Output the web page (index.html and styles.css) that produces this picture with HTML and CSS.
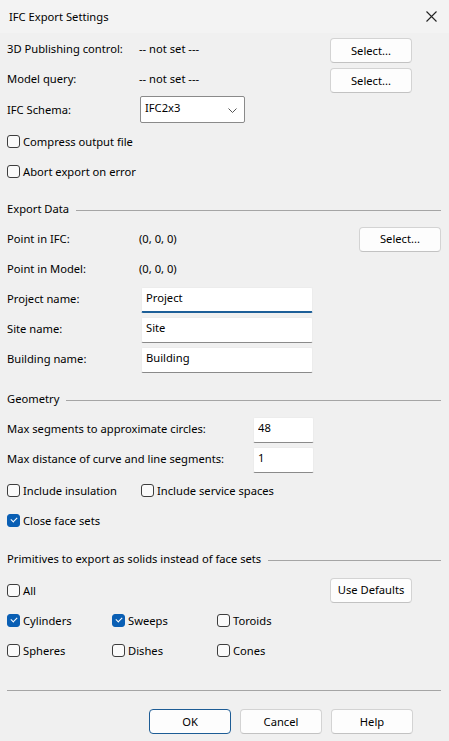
FILE: index.html
```html
<!DOCTYPE html>
<html lang="en">
<head>
    <meta charset="UTF-8">
    <meta name="viewport" content="width=device-width, initial-scale=1.0">
    <title>IFC Export Settings</title>
    <link rel="stylesheet" href="styles.css">
</head>
<body>
<div class="dialog">
    <div class="titlebar">
        <span class="title">IFC Export Settings</span>
        <svg class="close" width="11" height="11" viewBox="0 0 11 11">
            <path d="M0.5 0.5 L10.5 10.5 M10.5 0.5 L0.5 10.5" stroke="#222" stroke-width="1.1" fill="none"/>
        </svg>
    </div>

    <div class="content">
        <div class="row r1 pad_right">
            <span class="lbl">3D Publishing control:</span>
            <span class="val">-- not set ---</span>
            <button class="btn low">Select...</button>
        </div>
        <div class="row pad_right">
            <span class="lbl">Model query:</span>
            <span class="val">-- not set ---</span>
            <button class="btn low">Select...</button>
        </div>
        <div class="row r3">
            <span class="lbl">IFC Schema:</span>
            <div class="combo">
                <span>IFC2x3</span>
                <svg width="9" height="5" viewBox="0 0 9 5">
                    <path d="M0.5 0.5 L4.5 4.5 L8.5 0.5" stroke="#555" stroke-width="1" fill="none"/>
                </svg>
            </div>
        </div>
        <div class="row r4">
            <label class="chk"><span class="box"></span>Compress output file</label>
        </div>
        <div class="row">
            <label class="chk"><span class="box"></span>Abort export on error</label>
        </div>

        <div class="row group g1">
            <span class="gname">Export Data</span>
            <span class="gline"></span>
        </div>
        <div class="row r_pt">
            <span class="lbl">Point in IFC:</span>
            <span class="val">(0, 0, 0)</span>
            <button class="btn">Select...</button>
        </div>
        <div class="row">
            <span class="lbl">Point in Model:</span>
            <span class="val">(0, 0, 0)</span>
        </div>
        <div class="row">
            <span class="lbl lbl_in">Project name:</span>
            <input class="txt wide focused" type="text" value="Project">
        </div>
        <div class="row">
            <span class="lbl lbl_in">Site name:</span>
            <input class="txt wide" type="text" value="Site">
        </div>
        <div class="row">
            <span class="lbl lbl_in">Building name:</span>
            <input class="txt wide" type="text" value="Building">
        </div>

        <div class="row group g2">
            <span class="gname">Geometry</span>
            <span class="gline"></span>
        </div>
        <div class="row">
            <span class="lbl lbl_long lbl_in">Max segments to approximate circles:</span>
            <input class="txt short" type="text" value="48">
        </div>
        <div class="row">
            <span class="lbl lbl_long lbl_in">Max distance of curve and line segments:</span>
            <input class="txt short" type="text" value="1">
        </div>
        <div class="row r_ins">
            <label class="chk c134"><span class="box"></span>Include insulation</label>
            <label class="chk"><span class="box"></span>Include service spaces</label>
        </div>
        <div class="row">
            <label class="chk"><span class="box on"></span>Close face sets</label>
        </div>

        <div class="row group g3">
            <span class="gname">Primitives to export as solids instead of face sets</span>
            <span class="gline"></span>
        </div>
        <div class="row r_all pad_right">
            <label class="chk"><span class="box"></span>All</label>
            <span class="val"></span>
            <button class="btn">Use Defaults</button>
        </div>
        <div class="row">
            <label class="chk c105"><span class="box on"></span>Cylinders</label>
            <label class="chk c105"><span class="box on"></span>Sweeps</label>
            <label class="chk"><span class="box"></span>Toroids</label>
        </div>
        <div class="row">
            <label class="chk c105"><span class="box"></span>Spheres</label>
            <label class="chk c105"><span class="box"></span>Dishes</label>
            <label class="chk"><span class="box"></span>Cones</label>
        </div>

        <hr class="sep">

        <div class="actions">
            <button class="btn default">OK</button>
            <button class="btn">Cancel</button>
            <button class="btn">Help</button>
        </div>
    </div>
</div>
</body>
</html>
```

FILE: styles.css
```css
* {
  box-sizing: border-box;
}
body {
  margin: 0;
  background: #f0f0f0;
  font-family: "Noto Sans", sans-serif;
  font-size: 11.2px;
  color: #000;
}
.dialog {
  width: 449px;
  height: 741px;
}
.titlebar {
  height: 33px;
  display: flex;
  align-items: center;
  justify-content: space-between;
  padding: 0 12px 1px 9px;
  background: #f3f3f3;
}
.content {
  padding: 0 8px 0 7px;
}
.row {
  height: 30px;
  display: flex;
  align-items: center;
}
.pad_right {
  padding-right: 29px;
}
.r3 {
  margin-top: 1px;
}
.r4 {
  margin-top: 2px;
}
.lbl {
  width: 132px;
  flex-shrink: 0;
}
.lbl_long {
  width: 246px;
}
.lbl_in {
  padding-top: 1px;
}
.val {
  flex: 1;
}

/* buttons */
.btn {
  width: 82px;
  height: 25px;
  margin-left: auto;
  font-family: inherit;
  font-size: 11.2px;
  color: #000;
  background: #fdfdfd;
  border: 1px solid #d3d3d3;
  border-bottom-color: #c2c2c2;
  border-radius: 4px;
  padding: 0 0 1px;
}
.low {
  margin-top: 5px;
}
.r_pt .btn {
  margin-top: 2px;
}
.btn.default {
  border: 1px solid #1d5c95;
}

/* combo box */
.combo {
  width: 105px;
  height: 27px;
  margin-left: 1px;
  display: flex;
  align-items: center;
  justify-content: space-between;
  padding: 0 7px 4px 4px;
  background: #fff;
  border: 1px solid #8a8a8a;
  border-radius: 2px;
}
.combo svg {
  margin-top: 6px;
}

/* checkboxes */
.chk {
  display: flex;
  align-items: center;
}
.box {
  width: 13px;
  height: 13px;
  margin-right: 3px;
  border: 1px solid #3d3d3d;
  border-radius: 3px;
  background: #fafafa;
  position: relative;
}
.box.on {
  background: #0a5fb4;
  border-color: #0a5fb4;
}
.box.on::after {
  content: "";
  position: absolute;
  left: 3px;
  top: 2px;
  width: 5px;
  height: 3px;
  border-left: 1px solid #fff;
  border-bottom: 1px solid #fff;
  transform: rotate(-45deg);
}
.c134 {
  width: 134px;
}
.c105 {
  width: 105px;
}
.r_ins {
  margin-top: 2px;
}

/* group headers */
.group {
  gap: 7px;
}
.g1 {
  margin-top: 7px;
}
.g2 {
  margin-top: 10px;
}
.g3 {
  margin-top: 8px;
}
.gline {
  flex: 1;
  height: 1px;
  margin-top: 4px;
  background: #a5a5a5;
}
.r_all {
  margin-top: 2px;
}

/* text inputs */
.txt {
  height: 26px;
  align-self: flex-end;
  margin-left: 2px;
  padding: 0 4px 5px;
  font-family: inherit;
  font-size: 11.2px;
  color: #000;
  background: #fff;
  border: 1px solid #ececec;
  border-bottom: 1px solid #8a8a8a;
  border-radius: 2px;
  outline: none;
}
.wide {
  width: 172px;
}
.short {
  width: 61px;
  margin-left: 0;
}
.focused {
  border-bottom: 2px solid #1d5f98;
  padding-bottom: 4px;
}

.sep {
  margin: 25px 0 0;
  border: none;
  border-top: 1px solid #a5a5a5;
}
.actions {
  display: flex;
  justify-content: flex-end;
  gap: 9px;
  padding-right: 28px;
  margin-top: 18px;
}
.actions .btn {
  margin-left: 0;
}
```
